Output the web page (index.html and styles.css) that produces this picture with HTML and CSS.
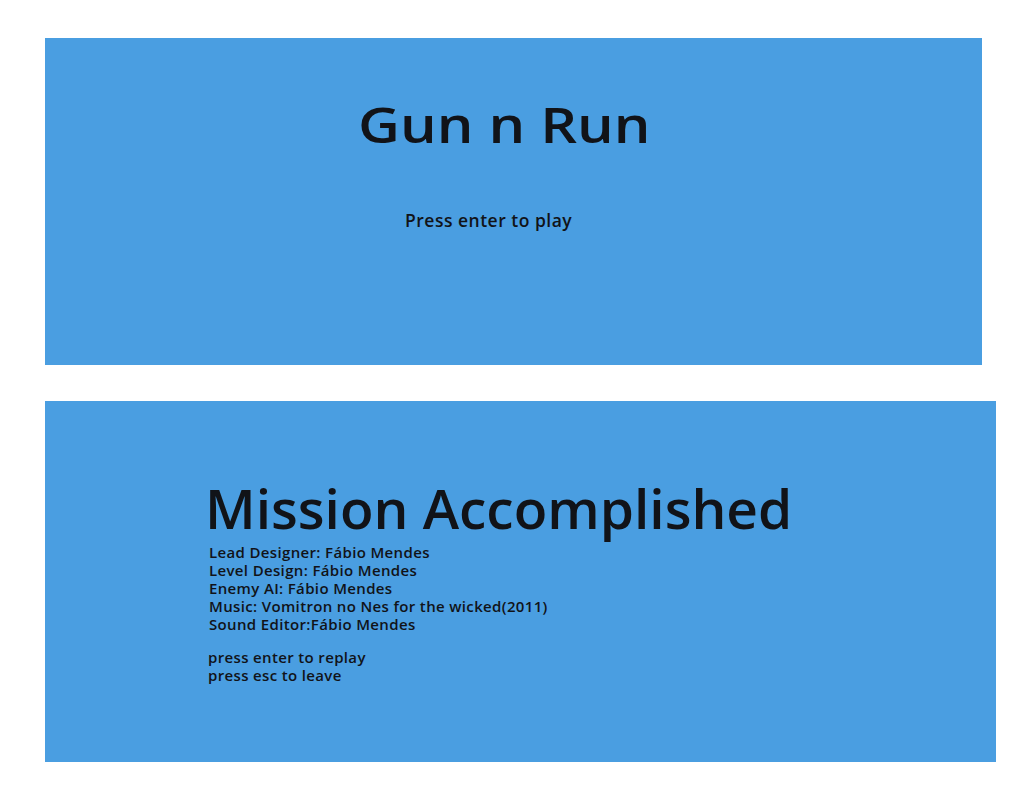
FILE: index.html
```html
<!DOCTYPE html>
<html>
<head>
<meta charset="utf-8">
<link rel="stylesheet" href="styles.css">
</head>
<body>
<section class="panel panel-start">
  <h1 class="title-start">Gun n Run</h1>
  <p class="hint-start">Press enter to play</p>
</section>
<section class="panel panel-end">
  <h1 class="title-end">Mission Accomplished</h1>
  <ul class="credits">
    <li>Lead Designer: Fábio Mendes</li>
    <li>Level Design: Fábio Mendes</li>
    <li>Enemy AI: Fábio Mendes</li>
    <li>Music: Vomitron no Nes for the wicked(2011)</li>
    <li>Sound Editor:Fábio Mendes</li>
  </ul>
  <ul class="controls">
    <li>press enter to replay</li>
    <li>press esc to leave</li>
  </ul>
</section>
</body>
</html>
```
FILE: styles.css
```css
html, body {
  margin: 0;
  padding: 0;
  background: #ffffff;
}
body {
  padding: 38px 0 0 45px;
  font-family: "Open Sans", "DejaVu Sans", sans-serif;
  color: #111318;
  display: flex;
  flex-direction: column;
  gap: 36px;
}
.panel {
  background: #4a9ee1;
  box-sizing: border-box;
  display: flex;
  flex-direction: column;
  align-items: flex-start;
}
.panel-start {
  width: 937px;
  height: 327px;
  padding: 56px 0 0 313px;
}
.title-start {
  margin: 0;
  font-size: 49px;
  font-weight: 600;
  line-height: 60px;
  transform: scaleX(1.18);
  transform-origin: left center;
}
.hint-start {
  margin: 56px 0 0 47px;
  font-size: 17.5px;
  font-weight: 600;
  line-height: 20px;
  letter-spacing: 0.5px;
}
.panel-end {
  width: 951px;
  height: 361px;
  padding: 79px 0 0 160px;
}
.title-end {
  margin: 0;
  font-size: 55px;
  font-weight: 600;
  line-height: 56px;
}
.credits, .controls {
  list-style: none;
  margin: 0;
  padding: 0 0 0 4px;
  font-size: 15px;
  font-weight: 600;
  line-height: 18px;
  letter-spacing: 0.35px;
}
.credits {
  margin-top: 7px;
}
.controls {
  margin-top: 15px;
  padding-left: 3px;
}
```
